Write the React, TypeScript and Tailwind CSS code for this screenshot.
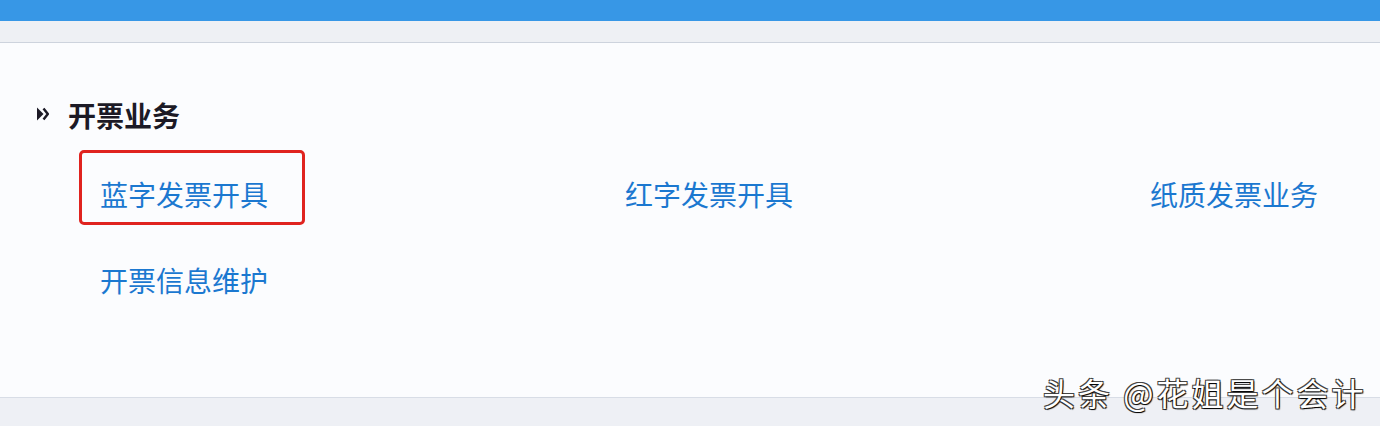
import type { ReactNode } from 'react';

const links = ['蓝字发票开具', '红字发票开具', '纸质发票业务', '开票信息维护'];

function SectionArrow() {
    return (
        <svg width="12" height="14" viewBox="0 0 12 14" className="mb-[3px] shrink-0">
            <path d="M0 0.5 L6.5 7 L0 13.5 Z" fill="#1c1a26" />
            <path d="M6.5 1.5 L10.8 7 L6.5 12.5" fill="none" stroke="#1c1a26" strokeWidth="2.4" />
        </svg>
    );
}

function LinkCell({ label, highlighted }: { label: string; highlighted?: boolean }): ReactNode {
    return (
        <div className="relative h-[36px]">
            {highlighted && (
                <div className="absolute -left-[21px] -top-[26px] h-[75px] w-[226px] rounded-[5px] border-[3px] border-[#e0231f]" />
            )}
            <a className="relative cursor-pointer text-[28px] leading-[36px] text-[#1b78d0]">{label}</a>
        </div>
    );
}

export default function App() {
    return (
        <div
            className="relative flex h-[426px] w-[1380px] flex-col overflow-hidden bg-[#eef0f5]"
            style={{ fontFamily: '"Noto Sans CJK SC", "Noto Sans", sans-serif' }}
        >
            <div className="h-[21px] bg-[#3797e6]" />
            <div className="h-[22px] border-b border-[#cdd3dd] bg-[#eef0f4]" />

            <div className="h-[355px] border-b border-[#d8dde6] bg-[#fbfcfe] pt-[54px]">
                <div className="flex items-center gap-[19px] pl-[37px]">
                    <SectionArrow />
                    <h2 className="text-[28px] font-bold leading-[36px] text-[#1c1a26]">开票业务</h2>
                </div>

                <div className="mt-[43px] grid grid-cols-[525px_525px_1fr] gap-y-[50px] pl-[100px]">
                    {links.map((label, index) => (
                        <LinkCell key={label} label={label} highlighted={index === 0} />
                    ))}
                </div>
            </div>

            <div className="absolute left-[1043px] top-[372px] text-[32px] leading-[40px] tracking-[3px] whitespace-nowrap text-white [text-shadow:1px_1px_1px_#000,-1px_-1px_0_#444,1px_-1px_0_#444,-1px_1px_0_#444]">
                头条 @花姐是个会计
            </div>
        </div>
    );
}
